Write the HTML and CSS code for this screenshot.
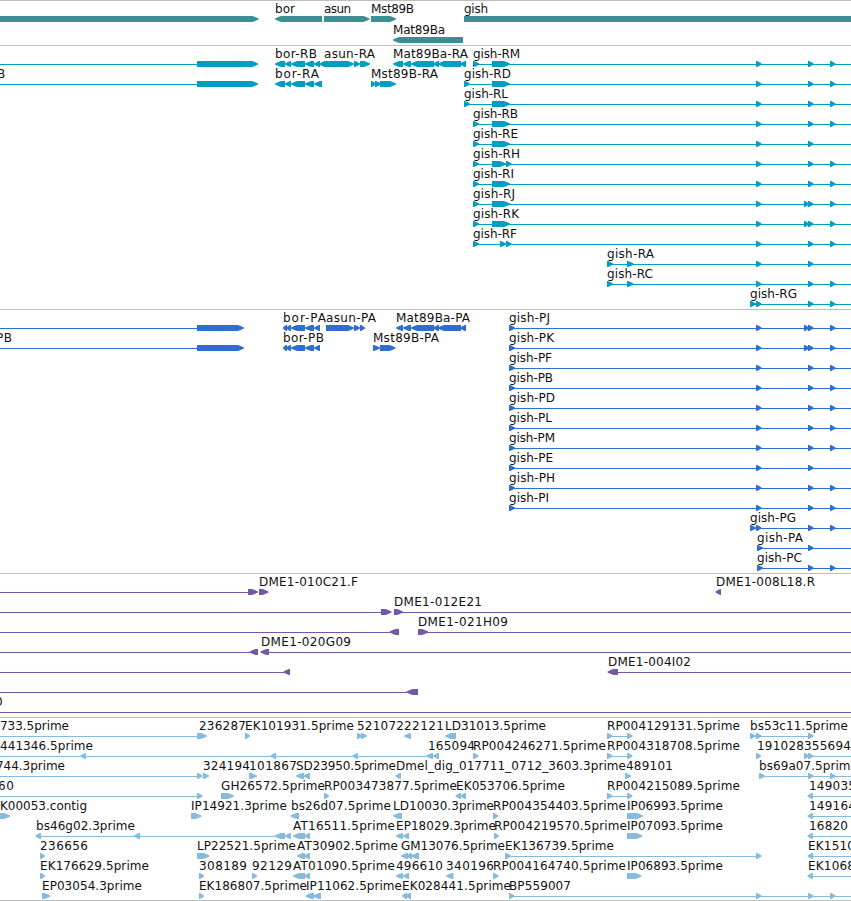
FILE: index.html
```html
<!DOCTYPE html>
<html lang="en">
<head>
    <meta charset="UTF-8">
    <title>Genome Browser</title>
    <link rel="stylesheet" href="styles.css">
</head>
<body>
    <main class="browser">
        <section class="track genes" id="genes"></section>
        <section class="track transcripts" id="transcripts"></section>
        <section class="track proteins" id="proteins"></section>
        <section class="track clones" id="clones"></section>
        <section class="track ests" id="ests"></section>
    </main>
    <script src="tracks.js"></script>
</body>
</html>
```

FILE: styles.css
```css
body {
    margin: 0;
    background: #fff;
    overflow: hidden;
}

.browser {
    display: flex;
    flex-direction: column;
    width: 851px;
    border-bottom: 1px solid #bebebe;
}

.track {
    box-sizing: border-box;
    border-top: 1px solid #bebebe;
    overflow: hidden;
}

.track svg {
    display: block;
}

.genes {
    height: 45px;
    color: #3d8d94;
}

.transcripts {
    height: 264px;
    color: #009fc1;
}

.proteins {
    height: 264px;
    color: #2f6dce;
}

.clones {
    height: 144px;
    color: #7557a8;
}

.ests {
    height: 183px;
    color: #86bbde;
}

.label {
    font-family: "DejaVu Sans", sans-serif;
    font-size: 12px;
    fill: #111;
}

.line,
.block {
    fill: currentColor;
}

.line {
    shape-rendering: crispEdges;
}
```

FILE: tracks.js
```js
const SVG = 'http://www.w3.org/2000/svg';

// Each row is [labels, lines, blocks]
// labels: [start, end, text], lines: [start, end]
// blocks: direction and range, e.g. "<275,285"
const borRA = '<275,285 <285,291 <291,305 <305,314 ';
const borP = '<283,287 <286,291 <291,305 <305,314 <314,320 ';
const exons = ' >756,761.5 >808,813.5 >830,835.5';
const exonsLong = ' >756,761.5 >804,809 >808,813.5 >830,835.5';
const exonsShort = ' >756,761.5 >808,813.5';
const rp = ' >607,612.5 >627,632.5';

const tracks = {
    genes: [
        [[[275, 295, 'bor'], [324, 351, 'asun'], [371, 414, 'Mst89B'], [464, 488, 'gish']], [],
            '>-10,258.5 <275,322 >324,369.5 >371,396 >464,870'],
        [[[393, 445, 'Mat89Ba']], [], '<393,463']
    ],
    transcripts: [
        [[[275, 317, 'bor-RB'], [324, 375, 'asun-RA'], [393, 468, 'Mat89Ba-RA'], [473, 520, 'gish-RM']], [[0, 197], [473, 851]],
            '>197,258 ' + borRA + '<314,320 <319,326 >324,354 >354,360 >360,370 <393,403 <403,411 <411,434 <433,439 <438,461 <460,466 >473,479 >492,510' + exons],
        [[[-3, 5, 'B'], [275, 319, 'bor-RA'], [371, 438, 'Mst89B-RA'], [464, 511, 'gish-RD']], [[0, 197], [464, 851]],
            '>197,258 ' + borRA + '<314,322 >371,376 >375,381 >380,396 >464,470 >492,510' + exons],
        [[[464, 508, 'gish-RL']], [[464, 851]], '>464,470 >492,510' + exons],
        [[[473, 518, 'gish-RB']], [[473, 851]], '>473,479 >492,510' + exons],
        [[[473, 518, 'gish-RE']], [[473, 851]], '>473,479 >492,510' + exonsShort],
        [[[473, 520, 'gish-RH']], [[473, 851]], '>473,479 >492,506 >506,511.5' + exons],
        [[[473, 514, 'gish-RI']], [[473, 851]], '>473,479 >492,510' + exons],
        [[[473, 515, 'gish-RJ']], [[473, 851]], '>473,479 >492,510' + exonsLong],
        [[[473, 519, 'gish-RK']], [[473, 851]], '>473,479 >492,510' + exonsLong],
        [[[473, 517, 'gish-RF']], [[473, 851]], '>473,479 >500,506 >506,511.5' + exons],
        [[[607, 654, 'gish-RA']], [[607, 851]], '>607,613 >627,633.5' + exonsShort],
        [[[607, 653, 'gish-RC']], [[607, 851]], '>607,613 >627,633.5' + exons],
        [[[750, 797, 'gish-RG']], [[750, 851]], '>750,756' + exons]
    ],
    proteins: [
        [[[283, 326, 'bor-PA'], [326, 376, 'asun-PA'], [396, 470, 'Mat89Ba-PA'], [509, 550, 'gish-PJ']], [[0, 197], [509, 851]],
            '>197,244 ' + borP + '>326,354 >354,360 >360,365 <396,403 <403,411 <411,434 <433,439 <438,461 <460,466 >509,515' + exonsLong],
        [[[-4, 12, 'PB'], [283, 324, 'bor-PB'], [373, 439, 'Mst89B-PA'], [509, 554, 'gish-PK']], [[0, 197], [509, 851]],
            '>197,244 ' + borP + '>373,380 >380,395.5 >509,515' + exonsLong],
        [[[509, 552, 'gish-PF']], [[509, 851]], '>509,515' + exons],
        [[[509, 553, 'gish-PB']], [[509, 851]], '>509,515' + exons],
        [[[509, 555, 'gish-PD']], [[509, 851]], '>509,515' + exons],
        [[[509, 552, 'gish-PL']], [[509, 851]], '>509,515' + exons],
        [[[509, 555, 'gish-PM']], [[509, 851]], '>509,515' + exons],
        [[[509, 553, 'gish-PE']], [[509, 851]], '>509,515' + exonsShort],
        [[[509, 555, 'gish-PH']], [[509, 851]], '>509,515' + exons],
        [[[509, 549, 'gish-PI']], [[509, 851]], '>509,515' + exons],
        [[[750, 796, 'gish-PG']], [[750, 851]], '>750,756' + exons],
        [[[757, 803, 'gish-PA']], [[757, 851]], '>757,763 >808,813.5'],
        [[[757, 802, 'gish-PC']], [[757, 851]], '>757,763 >808,813.5 >830,835.5']
    ],
    clones: [
        [[[259, 358, 'DME1-010C21.F'], [716, 815, 'DME1-008L18.R']], [[0, 248]], '>248,258 >259,268.5 <715.5,721'],
        [[[394, 482, 'DME1-012E21']], [[0, 381], [394, 851]], '>381,391.5 >394,403'],
        [[[418, 508, 'DME1-021H09']], [[0, 390], [418, 851]], '<389.5,399 >418,428'],
        [[[261, 351, 'DME1-020G09']], [[0, 250], [261, 851]], '<249.5,258 <260.5,269'],
        [[[608, 691, 'DME1-004I02']], [[0, 284], [608, 851]], '<283.5,290 <607.5,618'],
        [[], [[0, 407]], '<406.5,418'],
        [[[-5, 3, '0']], [[0, 851]], '']
    ],
    ests: [
        [[[0, 69, '733.5prime'], [199, 246, '236287'], [245, 354, 'EK101931.5prime'], [357, 404, '521072'], [404, 444, '22121'], [445, 546, 'LD31013.5prime'], [607, 740, 'RP004129131.5prime'], [750, 848, 'bs53c11.5prime']],
            [[0, 198], [607, 627], [750, 808]],
            '>197,207 >245,250 >357,362 >361,367 <404,411 <445,456' + rp + ' >750,756' + exonsShort],
        [[[0, 93, '441346.5prime'], [428, 475, '165094'], [473, 606, 'RP004246271.5prime'], [607, 740, 'RP004318708.5prime'], [757, 804, '191028'], [804, 851, '355694']],
            [[0, 426], [607, 627], [804, 851]],
            '<80.5,86 <270.5,276 <352.5,358 <426,433 <433,439 >473,478.5' + rp + ' >756,761 >804,809 >808,813.5'],
        [[[-4, 65, '744.3prime'], [203, 250, '324194'], [249, 297, '101867'], [296, 396, 'SD23950.5prime'], [396, 626, 'Dmel_dig_017711_0712_3603.3prime'], [626, 673, '489101'], [759, 858, 'bs69a07.5prime']],
            [[0, 197], [759, 851]],
            '>197,202.5 >203,209 >249,257 <296,304 <303,310 <395.5,401 >625,631 >759,765 >808,813.5 >830,835.5'],
        [[[-2, 14, '60'], [221, 325, 'GH26572.5prime'], [324, 457, 'RP003473877.5prime'], [456, 565, 'EK053706.5prime'], [607, 740, 'RP004215089.5prime'], [809, 856, '149035']],
            [[0, 197], [607, 627], [808, 851]],
            '>197,202.5 >221,234 >324,329 <455.5,461 <460,466' + rp + ' <807.5,813'],
        [[[0, 87, 'K00053.contig'], [191, 287, 'IP14921.3prime'], [291, 391, 'bs26d07.5prime'], [393, 494, 'LD10030.3prime'], [493, 626, 'RP004354403.5prime'], [627, 723, 'IP06993.5prime'], [809, 856, '149164']],
            [[808, 851]],
            '>0,10 >191,201.5 <290.5,299 <393,402 >493,498.5 >627,643 <807.5,813'],
        [[[36, 135, 'bs46g02.3prime'], [293, 395, 'AT16511.5prime'], [396, 496, 'EP18029.3prime'], [494, 627, 'RP004219570.5prime'], [627, 723, 'IP07093.5prime'], [809, 848, '16820']],
            [[36, 275], [808, 851]],
            '<35.5,41 <134,140 <274.5,285 <285,291 <293,305 <304,310 <396,403 <403,409 >494,499 >627,642.5 <807.5,813'],
        [[[40, 88, '236656'], [197, 296, 'LP22521.5prime'], [297, 398, 'AT30902.5prime'], [401, 505, 'GM13076.5prime'], [505, 614, 'EK136739.5prime'], [808, 855, 'EK1510']],
            [[505, 756], [808, 851]],
            '>40,45 >197,209.5 <297,305 <304,310 <401,408 <406,412 <411,419 >505,511 >756,761.5 <807.5,813'],
        [[[40, 149, 'EK176629.5prime'], [199, 247, '308189'], [252, 292, '92129'], [293, 395, 'AT01090.5prime'], [396, 443, '496610'], [446, 494, '340196'], [493, 626, 'RP004164740.5prime'], [627, 723, 'IP06893.5prime'], [808, 855, 'EK1068']],
            [[808, 851]],
            '>40,45 >199,204 >252,257 <293,305 <304,310 <396,403 <403,409 <446,453.5 >493,498.5 >627,641.5 <807.5,813'],
        [[[42, 142, 'EP03054.3prime'], [199, 307, 'EK186807.5prime'], [306, 402, 'IP11062.5prime'], [402, 511, 'EK028441.5prime'], [509, 571, 'BP559007']],
            [[509, 851]],
            '>42,50.5 >199,204 <305.5,314 <313,321 <402,407 <405,411 >509,514.5' + exons]
    ]
};

function add(parent, name, attrs, text) {
    const el = document.createElementNS(SVG, name);
    for (const key in attrs) {
        el.setAttribute(key, attrs[key]);
    }
    if (text) {
        el.textContent = text;
    }
    parent.appendChild(el);
    return el;
}

function drawBlock(svg, block, y) {
    const [start, end] = block.slice(1).split(',').map(Number);
    const forward = block[0] === '>';
    const tip = forward ? end : start;
    const back = forward ? start : end;
    const head = Math.min(end - start - 1, 6) * (forward ? 1 : -1);
    const neck = tip - head;
    const mid = tip - head * 0.55;
    // rounded head, full height up to the neck
    const points = [
        [back, y], [neck, y], [mid, y + 1], [tip, y + 2.5],
        [tip, y + 3.5], [mid, y + 5], [neck, y + 6], [back, y + 6]
    ];
    add(svg, 'polygon', { class: 'block', points: points.join(' ') });
}

function drawTrack(id, rows) {
    const rowHeight = id === 'genes' ? 21 : 20;
    const section = document.getElementById(id);
    const svg = add(section, 'svg', { width: 851, height: section.clientHeight });

    rows.forEach(([labels, lines, blocks], i) => {
        const y = i * rowHeight;
        lines.forEach(([start, end]) => {
            add(svg, 'rect', { class: 'line', x: start, y: y + 18, width: end - start, height: 1 });
        });
        blocks.split(' ').filter(Boolean).forEach(block => drawBlock(svg, block, y + 15));
        labels.forEach(([start, end, text]) => {
            add(svg, 'text', { class: 'label', x: start, y: y + 12, textLength: end - start }, text);
        });
    });
}

for (const id in tracks) {
    drawTrack(id, tracks[id]);
}
```
